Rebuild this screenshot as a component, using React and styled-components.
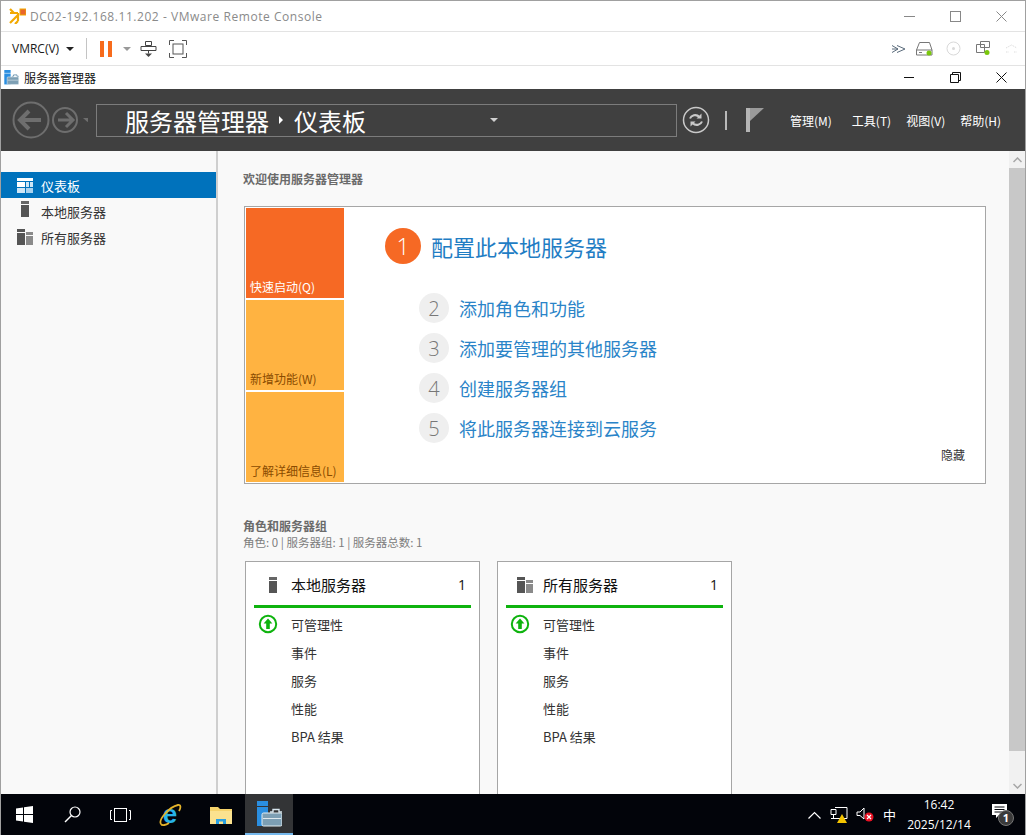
import React from 'react';
import styled, { createGlobalStyle } from 'styled-components';

const GlobalStyle = createGlobalStyle`
  html, body { margin: 0; padding: 0; background: #fff; overflow: hidden; }
  * { box-sizing: border-box; }
  body { font-family: "Noto Sans CJK SC", "Open Sans", sans-serif; }
`;

const Screen = styled.div`
  width: 1026px;
  height: 835px;
  display: flex;
  flex-direction: column;
  overflow: hidden;
  border-top: 1px solid #a0a0a0;
  border-left: 1px solid #a0a0a0;
  border-right: 1px solid #a0a0a0;
`;

const TitleBar = styled.div`
  height: 31px;
  flex: none;
  display: flex;
  align-items: center;
  padding-left: 8px;
  background: #fff;
  border-bottom: 1px solid #e3e3e3;
`;

const TitleText = styled.span`
  margin-left: 4px;
  font-family: "Open Sans", "Noto Sans", sans-serif;
  font-size: 12px;
  letter-spacing: 0.55px;
  color: #8a8a8a;
  flex: 1;
`;

const WinButton = styled.div`
  width: 46px;
  height: 30px;
  flex: none;
  display: flex;
  align-items: center;
  justify-content: center;
`;

const WinButtons = styled.div`
  display: flex;
  margin-right: ${p => p.$right || 0}px;
`;

const Toolbar = styled.div`
  height: 34px;
  flex: none;
  display: flex;
  align-items: center;
  padding-left: 11px;
  padding-right: 7px;
  background: #fff;
  border-bottom: 1px solid #e3e3e3;
`;

const MenuLabel = styled.span`
  font-family: "Open Sans", "Noto Sans", sans-serif;
  font-size: 12px;
  color: #1a1a1a;
`;

const Caret = styled.span`
  width: 0;
  height: 0;
  margin-left: ${p => p.$left || 0}px;
  border-left: 4px solid transparent;
  border-right: 4px solid transparent;
  border-top: 4px solid ${p => p.$color || '#222'};
`;

const ToolDivider = styled.span`
  width: 1px;
  height: 21px;
  margin: 0 13px 0 12px;
  background: #c4c4c4;
`;

const PauseBars = styled.span`
  width: 12px;
  height: 16px;
  border-left: 4px solid #f76b1c;
  border-right: 4px solid #f76b1c;
`;

const ToolIcon = styled.svg`
  display: block;
  flex: none;
  margin-left: ${p => p.$left || 0}px;
`;

const Spacer = styled.div`
  flex: 1;
`;

const AppTitleBar = styled.div`
  height: 23px;
  flex: none;
  display: flex;
  align-items: center;
  padding-left: 3px;
  background: #fff;
`;

const AppTitle = styled.span`
  margin-left: 5px;
  font-size: 12px;
  color: #111;
  flex: 1;
`;

const Header = styled.div`
  height: 62px;
  flex: none;
  display: flex;
  align-items: center;
  padding-left: 11px;
  background: #404040;
`;

const Crumb = styled.div`
  width: 581px;
  height: 33px;
  margin-left: 8px;
  padding: 0 8px 0 28px;
  display: flex;
  align-items: center;
  border: 1px solid #7c7c7c;
  color: #fff;
  font-size: 24px;
`;

const CrumbArrow = styled.span`
  width: 0;
  height: 0;
  margin: 0 11px 0 10px;
  border-top: 4px solid transparent;
  border-bottom: 4px solid transparent;
  border-left: 4px solid #fff;
`;

const HeaderBar = styled.span`
  width: 2px;
  height: 19px;
  margin: 0 19px 0 12px;
  background: #b9b9b9;
`;

const HeaderMenu = styled.nav`
  display: flex;
  margin-left: 26px;
`;

const HeaderItem = styled.span`
  font-size: 12px;
  color: #fff;
  margin-left: ${p => p.$left}px;
  white-space: nowrap;
`;

const Body = styled.div`
  flex: 1;
  min-height: 0;
  display: flex;
  background: #f9f9f9;
`;

const Sidebar = styled.aside`
  width: 217px;
  flex: none;
  padding-top: 21px;
  border-right: 2px solid #cfcfcf;
`;

const NavItem = styled.div`
  height: 26px;
  width: 215px;
  display: flex;
  align-items: center;
  font-size: 13px;
  color: ${p => (p.$active ? '#fff' : '#333')};
  background: ${p => (p.$active ? '#0072bc' : 'transparent')};
`;

const NavIconSlot = styled.span`
  width: 40px;
  flex: none;
  padding-left: 16px;
  display: flex;
`;

const Content = styled.main`
  flex: 1;
  min-width: 0;
  padding: 19px 0 0 25px;
  overflow: hidden;
`;

const SectionTitle = styled.div`
  font-size: 12px;
  line-height: 18px;
  font-weight: 700;
  color: #6b6b6b;
`;

const QuickStart = styled.div`
  width: 742px;
  height: 278px;
  margin: 18px 0 0 1px;
  padding: 1px;
  display: flex;
  background: #fff;
  border: 1px solid #a6a6a6;
`;

const Tiles = styled.div`
  width: 98px;
  flex: none;
  display: flex;
  flex-direction: column;
  gap: 2px;
`;

const Tile = styled.div`
  flex: 1;
  display: flex;
  align-items: flex-end;
  padding: 0 0 3px 4px;
  font-size: 12px;
  line-height: 16px;
  color: ${p => (p.$hot ? '#fff' : '#8a4b00')};
  background: ${p => (p.$hot ? '#f66924' : '#ffb341')};
`;

const Steps = styled.div`
  flex: 1;
  position: relative;
  padding: 20px 0 0 41px;
`;

const StepMain = styled.div`
  display: flex;
  align-items: center;
  height: 36px;
  margin-bottom: 24px;
`;

const StepMainNum = styled.span`
  width: 36px;
  height: 36px;
  flex: none;
  display: flex;
  align-items: center;
  justify-content: center;
  border-radius: 50%;
  background: #f66924;
  color: #fff;
  font-family: "Open Sans", sans-serif;
  font-size: 23px;
  font-weight: 300;
`;

const StepMainText = styled.span`
  margin-left: 10px;
  font-size: 22px;
  color: #1f7dc4;
`;

const Step = styled.div`
  display: flex;
  align-items: center;
  height: 40px;
  margin-left: 34px;
`;

const StepNum = styled.span`
  width: 30px;
  height: 30px;
  flex: none;
  display: flex;
  align-items: center;
  justify-content: center;
  border-radius: 50%;
  background: #efefef;
  color: #777;
  font-family: "Open Sans", sans-serif;
  font-size: 20px;
  font-weight: 300;
`;

const StepText = styled.span`
  margin-left: 10px;
  font-size: 18px;
  color: #2a84c8;
`;

const HideLink = styled.span`
  position: absolute;
  right: 19px;
  bottom: 19px;
  font-size: 12px;
  line-height: 16px;
  color: #333;
`;

const RolesHead = styled.div`
  margin-top: 33px;
`;

const RolesSub = styled.div`
  font-size: 11.5px;
  line-height: 15px;
  color: #7d7d7d;
`;

const Cards = styled.div`
  display: flex;
  gap: 17px;
  margin: 11px 0 0 2px;
`;

const Card = styled.div`
  width: 235px;
  height: 260px;
  padding: 0 8px;
  background: #fff;
  border: 1px solid #a6a6a6;
`;

const CardHead = styled.div`
  height: 46px;
  display: flex;
  align-items: center;
  border-bottom: 3px solid #0eb30e;
  padding-top: 2px;
  font-size: 15px;
  color: #111;
`;

const CardIconSlot = styled.span`
  width: 37px;
  flex: none;
  display: flex;
  justify-content: center;
`;

const CardCount = styled.span`
  margin-left: auto;
  margin-right: 5px;
  font-family: "Open Sans", sans-serif;
  font-size: 14px;
`;

const CardRows = styled.div`
  padding-top: 2px;
`;

const CardRow = styled.div`
  height: 28px;
  display: flex;
  align-items: center;
  font-size: 13px;
  color: #333;
`;

const RowIconSlot = styled.span`
  width: 37px;
  flex: none;
  padding-left: 4px;
  display: flex;
`;

const ScrollTrack = styled.div`
  width: 16px;
  flex: none;
  display: flex;
  flex-direction: column;
  background: #f1f1f1;
`;

const ScrollButton = styled.div`
  height: 17px;
  flex: none;
  display: flex;
  align-items: center;
  justify-content: center;
  background: #f1f1f1;
`;

const ScrollThumb = styled.div`
  height: 583px;
  flex: none;
  background: #c8c8c8;
`;

const Taskbar = styled.div`
  height: 41px;
  margin: 0 -1px;
  flex: none;
  display: flex;
  align-items: center;
  background: #02040a;
`;

const TaskSlot = styled.div`
  width: 48px;
  height: 100%;
  flex: none;
  display: flex;
  align-items: center;
  justify-content: center;
  background: ${p => (p.$active ? '#333436' : 'transparent')};
  border-bottom: ${p => (p.$active ? '2px solid #76b9ed' : 'none')};
`;

const Tray = styled.div`
  margin-left: auto;
  height: 100%;
  display: flex;
  align-items: center;
  color: #fff;
`;

const TrayIme = styled.span`
  font-size: 13px;
  margin: 0 0 0 9px;
`;

const Clock = styled.div`
  width: 78px;
  margin-left: 4px;
  text-align: center;
  font-family: "Open Sans", sans-serif;
  font-size: 12px;
  line-height: 20px;
`;

const NoticeSlot = styled.div`
  width: 48px;
  display: flex;
  justify-content: center;
`;

const ServerIcon = ({ size = 1 }) => (
  <svg width={8 * size} height={16 * size} viewBox="0 0 8 16">
    <rect width="8" height="3" fill="#666" />
    <rect y="4" width="8" height="12" fill="#555" />
  </svg>
);

const ServersIcon = () => (
  <svg width="16" height="16" viewBox="0 0 16 16">
    <rect width="8" height="3" fill="#555" />
    <rect y="4" width="8" height="12" fill="#555" />
    <rect x="9" y="3" width="7" height="3" fill="#8a8a8a" />
    <rect x="9" y="7" width="7" height="9" fill="#8a8a8a" />
  </svg>
);

const DashboardIcon = () => (
  <svg width="16" height="15" viewBox="0 0 16 15">
    <rect width="16" height="3" fill="#fff" />
    <rect y="4" width="8" height="5" fill="#fff" />
    <rect x="9" y="4" width="3" height="5" fill="#cfe6f5" />
    <rect x="13" y="4" width="3" height="5" fill="#cfe6f5" />
    <rect y="10" width="8" height="5" fill="#cfe6f5" />
    <rect x="9" y="10" width="7" height="5" fill="#a9d2ee" />
  </svg>
);

const UpIcon = () => (
  <svg width="20" height="20" viewBox="0 0 20 20">
    <circle cx="10" cy="10" r="8.2" fill="#fff" stroke="#0eb30e" strokeWidth="2" />
    <path d="M10 4.5 14.4 9.6H11.8V15H8.2V9.6H5.6Z" fill="#0eb30e" />
  </svg>
);

const ManagerIcon = ({ large }) => (
  <svg width={large ? 25 : 15} height={large ? 26 : 15} viewBox="0 0 25 26">
    <rect x="0" y="0" width="11" height="5" fill="#2a8ee0" />
    <rect x="0" y="6" width="11" height="19" fill="#2a8ee0" />
    <path d="M13 11h3v-2.500h6V11h3" fill="none" stroke={large ? '#d8e6ee' : '#5b87a5'} strokeWidth="1.400" />
    <rect x="5" y="12" width="20" height="13" rx="1.500" fill="#7d9fb4" stroke="#e3edf2" strokeWidth="1" />
    <rect x="6" y="17" width="18" height="1" fill="#dfe9ef" />
  </svg>
);

const IeIcon = () => (
  <svg width="24" height="24" viewBox="0 0 24 24">
    <text x="12" y="20" textAnchor="middle" fontFamily="Liberation Sans, sans-serif" fontSize="26" fontWeight="700" fill="#27b3e8">e</text>
    <path d="M3 21C0 17 11 4 20 2c3-.7 3 3 1 6" fill="none" stroke="#e3b32b" strokeWidth="1.800" />
    <path d="M3 21c1 2 5 1 8-1" fill="none" stroke="#e3b32b" strokeWidth="1.800" />
  </svg>
);

const FolderIcon = () => (
  <svg width="22" height="18" viewBox="0 0 22 18">
    <path d="M0 1h8l2 2h12v15H0Z" fill="#f6d36b" />
    <rect y="5" width="22" height="13" fill="#fbe28f" />
    <path d="M6 18v-5h10v5h-3v-2.500H9V18Z" fill="#2a9fe0" />
  </svg>
);

const steps = ['添加角色和功能', '添加要管理的其他服务器', '创建服务器组', '将此服务器连接到云服务'];
const rows = ['事件', '服务', '性能', 'BPA 结果'];
const cards = [
  { title: '本地服务器', icon: <ServerIcon /> },
  { title: '所有服务器', icon: <ServersIcon /> },
];

export default function App() {
  return (
    <Screen>
      <GlobalStyle />
      <TitleBar>
        <svg width="17" height="16" viewBox="0 0 17 16">
          <path d="M1 5h8M9 5v8M5 5 1 1M9 13l-3 3M9 7l-8 8" stroke="#f2a900" strokeWidth="2.200" fill="none" />
          <rect x="11" y="1" width="6" height="6" fill="#e8662c" stroke="#f2a900" />
        </svg>
        <TitleText>DC02-192.168.11.202 - VMware Remote Console</TitleText>
        <WinButtons $right={1}>
          <WinButton>
            <svg width="11" height="11" viewBox="0 0 11 11"><path d="M0 5.500h11" stroke="#888" /></svg>
          </WinButton>
          <WinButton>
            <svg width="11" height="11" viewBox="0 0 11 11"><rect x=".5" y=".5" width="10" height="10" fill="none" stroke="#888" /></svg>
          </WinButton>
          <WinButton>
            <svg width="11" height="11" viewBox="0 0 11 11"><path d="M.5.500l10 10M10.500.500l-10 10" stroke="#888" /></svg>
          </WinButton>
        </WinButtons>
      </TitleBar>

      <Toolbar>
        <MenuLabel>VMRC(V)</MenuLabel>
        <Caret $left={7} />
        <ToolDivider />
        <PauseBars />
        <Caret $left={11} $color="#999" />
        <ToolIcon $left={9} width="17" height="18" viewBox="0 0 17 18">
          <path d="M5.500 1.500h6v4h-6zM1 6.500h15v4H1zM8.500 10.500v3" fill="none" stroke="#444" />
          <path d="M5 13.500h7L8.500 17Z" fill="#444" />
        </ToolIcon>
        <ToolIcon $left={12} width="18" height="18" viewBox="0 0 18 18">
          <path d="M.5 5V.500H5M13 .500h4.500V5M17.500 13v4.500H13M5 17.500H.5V13" fill="none" stroke="#555" />
          <rect x="4" y="4" width="10" height="10" fill="none" stroke="#555" />
        </ToolIcon>
        <Spacer />
        <ToolIcon width="14" height="8" viewBox="0 0 14 8">
          <path d="M0 .500 6 4 0 7.500M0 4h6M5 .500 13 4 5 7.500" fill="none" stroke="#5a6b7b" />
        </ToolIcon>
        <ToolIcon $left={10} width="17" height="14" viewBox="0 0 17 14">
          <path d="M3.500.500h10L16 8v5H.5V8ZM.5 8H16M3 10.500h3" fill="none" stroke="#777" />
          <circle cx="13" cy="11" r="2.500" fill="#7ac70c" />
        </ToolIcon>
        <ToolIcon $left={13} width="15" height="15" viewBox="0 0 15 15">
          <circle cx="7.500" cy="7.500" r="6.500" fill="none" stroke="#d9d9d9" />
          <circle cx="7.500" cy="7.500" r="1.500" fill="#d9d9d9" />
        </ToolIcon>
        <ToolIcon $left={14} width="16" height="15" viewBox="0 0 16 15">
          <path d="M1.500 3.500h8v8h-8zM5.500.500h9v6h-9z" fill="#fff" stroke="#777" />
          <circle cx="12" cy="11.500" r="2.500" fill="#7ac70c" />
        </ToolIcon>
        <ToolIcon $left={14} width="13" height="10" viewBox="0 0 13 10">
          <path d="M1 4 6.500 1 12 4M1 8h3M9 8h3" fill="none" stroke="#ddd" strokeDasharray="1.500 1" />
        </ToolIcon>
      </Toolbar>

      <AppTitleBar>
        <ManagerIcon />
        <AppTitle>服务器管理器</AppTitle>
        <WinButtons $right={1}>
          <WinButton>
            <svg width="11" height="11" viewBox="0 0 11 11"><path d="M0 5.500h10" stroke="#111" /></svg>
          </WinButton>
          <WinButton>
            <svg width="11" height="11" viewBox="0 0 11 11"><path d="M.5 2.500h8v8h-8zM2.500 2.500v-2h8v8h-2" fill="none" stroke="#111" /></svg>
          </WinButton>
          <WinButton>
            <svg width="11" height="11" viewBox="0 0 11 11"><path d="M.5.500l10 10M10.500.500l-10 10" stroke="#111" /></svg>
          </WinButton>
        </WinButtons>
      </AppTitleBar>

      <Header>
        <svg width="76" height="38" viewBox="0 0 76 38">
          <circle cx="19" cy="19" r="17.500" fill="none" stroke="#6e6e6e" strokeWidth="2" />
          <path d="M8 19h21M17 10l-9 9 9 9" fill="none" stroke="#6e6e6e" strokeWidth="4" />
          <circle cx="53" cy="19" r="12" fill="none" stroke="#6e6e6e" strokeWidth="2" />
          <path d="M60 19H46M54 12l7 7-7 7" fill="none" stroke="#6e6e6e" strokeWidth="3" />
          <path d="M71 17h9l-4.500 4Z" fill="#6e6e6e" />
        </svg>
        <Crumb>
          服务器管理器
          <CrumbArrow />
          仪表板
          <Caret $left={124} $color="#d0d0d0" />
        </Crumb>
        <svg width="34" height="28" viewBox="0 0 28 28" style={{ marginLeft: 2 }}>
          <circle cx="14" cy="14" r="12.500" fill="none" stroke="#c9c9c9" strokeWidth="1.500" />
          <path d="M8 12.500c1-3 6-5 9.500-1.500M20 15.500c-1 3-6 5-9.500 1.500" fill="none" stroke="#c9c9c9" strokeWidth="2" />
          <path d="M19.500 7.500v5h-5ZM8.500 20.500v-5h5Z" fill="#c9c9c9" />
        </svg>
        <HeaderBar />
        <svg width="18" height="24" viewBox="0 0 18 24">
          <rect width="4" height="24" fill="#b5b5b5" />
          <path d="M4 0h14L4 13Z" fill="#9a9a9a" />
        </svg>
        <HeaderMenu>
          <HeaderItem $left={0}>管理(M)</HeaderItem>
          <HeaderItem $left={20}>工具(T)</HeaderItem>
          <HeaderItem $left={15}>视图(V)</HeaderItem>
          <HeaderItem $left={15}>帮助(H)</HeaderItem>
        </HeaderMenu>
      </Header>

      <Body>
        <Sidebar>
          <NavItem $active>
            <NavIconSlot><DashboardIcon /></NavIconSlot>
            仪表板
          </NavItem>
          <NavItem>
            <NavIconSlot><span style={{ paddingLeft: 4 }}><ServerIcon /></span></NavIconSlot>
            本地服务器
          </NavItem>
          <NavItem>
            <NavIconSlot><ServersIcon /></NavIconSlot>
            所有服务器
          </NavItem>
        </Sidebar>

        <Content>
          <SectionTitle>欢迎使用服务器管理器</SectionTitle>
          <QuickStart>
            <Tiles>
              <Tile $hot>快速启动(Q)</Tile>
              <Tile>新增功能(W)</Tile>
              <Tile>了解详细信息(L)</Tile>
            </Tiles>
            <Steps>
              <StepMain>
                <StepMainNum>1</StepMainNum>
                <StepMainText>配置此本地服务器</StepMainText>
              </StepMain>
              {steps.map((text, i) => (
                <Step key={text}>
                  <StepNum>{i + 2}</StepNum>
                  <StepText>{text}</StepText>
                </Step>
              ))}
              <HideLink>隐藏</HideLink>
            </Steps>
          </QuickStart>

          <RolesHead>
            <SectionTitle>角色和服务器组</SectionTitle>
            <RolesSub>角色: 0 | 服务器组: 1 | 服务器总数: 1</RolesSub>
          </RolesHead>

          <Cards>
            {cards.map(card => (
              <Card key={card.title}>
                <CardHead>
                  <CardIconSlot>{card.icon}</CardIconSlot>
                  {card.title}
                  <CardCount>1</CardCount>
                </CardHead>
                <CardRows>
                  <CardRow>
                    <RowIconSlot><UpIcon /></RowIconSlot>
                    可管理性
                  </CardRow>
                  {rows.map(row => (
                    <CardRow key={row}>
                      <RowIconSlot />
                      {row}
                    </CardRow>
                  ))}
                </CardRows>
              </Card>
            ))}
          </Cards>
        </Content>

        <ScrollTrack>
          <ScrollButton>
            <svg width="9" height="6" viewBox="0 0 9 6"><path d="M.5 5 4.500 1l4 4" fill="none" stroke="#a6a6a6" strokeWidth="1.500" /></svg>
          </ScrollButton>
          <ScrollThumb />
          <Spacer />
          <ScrollButton>
            <svg width="9" height="6" viewBox="0 0 9 6"><path d="M.5 1l4 4 4-4" fill="none" stroke="#a6a6a6" strokeWidth="1.500" /></svg>
          </ScrollButton>
        </ScrollTrack>
      </Body>

      <Taskbar>
        <TaskSlot>
          <svg width="17" height="17" viewBox="0 0 17 17">
            <path d="M0 2.400 7 1.400V8H0ZM8 1.300 17 0V8H8ZM0 9H7V15.600L0 14.600ZM8 9H17V17L8 15.700Z" fill="#fff" />
          </svg>
        </TaskSlot>
        <TaskSlot>
          <svg width="17" height="17" viewBox="0 0 17 17">
            <circle cx="11" cy="6" r="5" fill="none" stroke="#fff" strokeWidth="1.200" />
            <path d="M7.500 9.500 1 16" stroke="#fff" strokeWidth="1.400" />
          </svg>
        </TaskSlot>
        <TaskSlot>
          <svg width="21" height="14" viewBox="0 0 21 14">
            <rect x="4.500" y=".5" width="12" height="13" fill="none" stroke="#fff" />
            <path d="M2 2.500H.5v9H2M19 2.500h1.500v9H19" fill="none" stroke="#fff" />
          </svg>
        </TaskSlot>
        <TaskSlot style={{ width: 52 }}><IeIcon /></TaskSlot>
        <TaskSlot style={{ width: 49 }}><FolderIcon /></TaskSlot>
        <TaskSlot $active><ManagerIcon large /></TaskSlot>
        <Tray>
          <svg width="13" height="8" viewBox="0 0 13 8"><path d="M.5 7.500l6-6 6 6" fill="none" stroke="#fff" strokeWidth="1.200" /></svg>
          <svg width="18" height="18" viewBox="0 0 18 18" style={{ marginLeft: 9 }}>
            <path d="M5 1.500h12v11H5M1 3.500h5v5H1zM3.500 8.500v4M1 12.500h6" fill="none" stroke="#fff" />
            <path d="M12 8l5 9H7Z" fill="#f5c400" />
          </svg>
          <svg width="18" height="16" viewBox="0 0 18 16" style={{ marginLeft: 8 }}>
            <path d="M1 5h3l4-4v11L4 8.500H1Z" fill="none" stroke="#fff" />
            <circle cx="13" cy="10" r="4.500" fill="#e81123" />
            <path d="M11 8l4 4M15 8l-4 4" stroke="#fff" strokeWidth="1.200" />
          </svg>
          <TrayIme>中</TrayIme>
          <Clock>
            16:42
            <br />
            2025/12/14
          </Clock>
          <NoticeSlot>
            <svg width="23" height="23" viewBox="0 0 23 23">
              <path d="M1 1h15v11H8l-3 3v-3H1Z" fill="#fff" />
              <path d="M3.500 4h10M3.500 6.500h10M3.500 9h10" stroke="#02040a" />
              <circle cx="15" cy="15" r="7.500" fill="#3a3a3a" stroke="#777" />
              <text x="15" y="19" textAnchor="middle" fontFamily="Open Sans, sans-serif" fontSize="11" fontWeight="700" fill="#fff">1</text>
            </svg>
          </NoticeSlot>
        </Tray>
      </Taskbar>
    </Screen>
  );
}
